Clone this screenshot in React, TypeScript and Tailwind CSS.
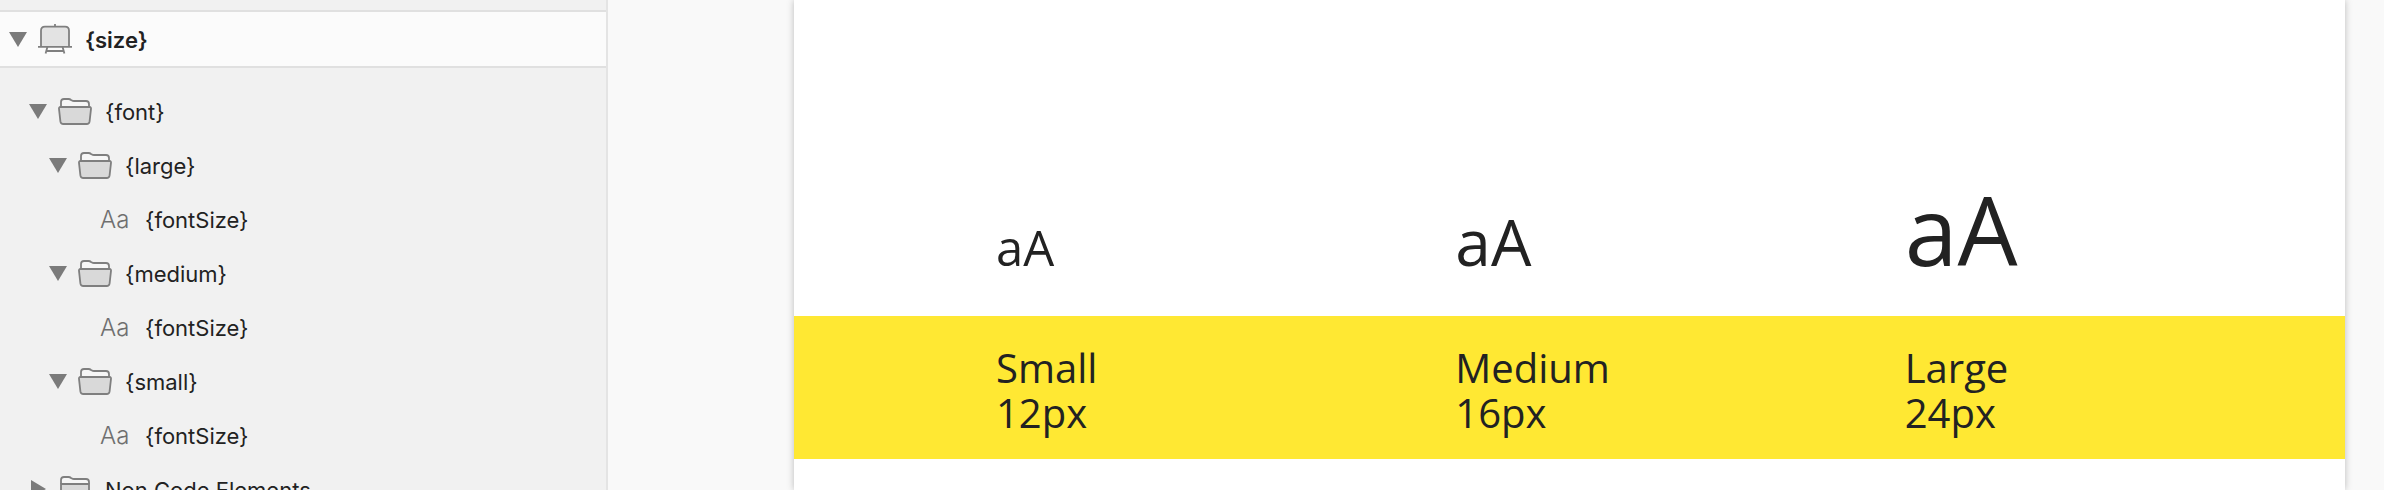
import React from "react";

function Disclosure({ open, label }: { open: boolean; label: string }) {
  return (
    <button
      type="button"
      aria-expanded={open}
      aria-label={label}
      className="flex h-6 w-[18px] shrink-0 items-center justify-center text-[#7b7b7b]"
    >
      {open ? (
        <svg width="18" height="15" viewBox="0 0 18 15" fill="currentColor" aria-hidden="true">
          <path d="M0 0H18L9 15Z" />
        </svg>
      ) : (
        <svg width="15" height="18" viewBox="0 0 15 18" fill="currentColor" aria-hidden="true">
          <path d="M0 0L15 9L0 18Z" />
        </svg>
      )}
    </button>
  );
}

function ArtboardIcon() {
  return (
    <svg width="34" height="30" viewBox="0 0 34 30" fill="none" stroke="#7f7f7f" strokeWidth="1.8" className="shrink-0" aria-hidden="true">
      <path d="M17 0V2.6" />
      <path d="M3 22.6V6.6Q3 2.6 7 2.6H27Q31 2.6 31 6.6V22.6" fill="#e3e3e3" />
      <path d="M0 22.8H34" />
      <path d="M9.4 23L7.6 29.4M24.6 23L26.4 29.4M8.6 27H25.4" />
    </svg>
  );
}

function OpenFolderIcon() {
  return (
    <svg width="34" height="27" viewBox="0 0 34 27" fill="none" stroke="#7f7f7f" strokeWidth="1.8" strokeLinejoin="round" className="shrink-0" aria-hidden="true">
      <path d="M3 9V4Q3 1 6 1H10.5Q12 1 13 2L14 2.6Q14.6 3 16 3H28Q31 3 31 6V9" fill="#f6f6f6" />
      <path d="M2.4 9H31.6Q33.2 9 33 10.8L31.6 23.4Q31.2 26 28.8 26H5.2Q2.8 26 2.4 23.4L1 10.8Q0.8 9 2.4 9Z" fill="#d9d9d9" />
    </svg>
  );
}

function ClosedFolderIcon() {
  return (
    <svg width="34" height="27" viewBox="0 0 34 27" fill="none" stroke="#7f7f7f" strokeWidth="1.8" strokeLinejoin="round" className="shrink-0" aria-hidden="true">
      <path d="M3 8V4Q3 1 6 1H10.5Q12 1 13 2L14 2.6Q14.6 3 16 3H28Q31 3 31 6V8" fill="#f6f6f6" />
      <path d="M3 8H31V23Q31 26 28 26H6Q3 26 3 23Z" fill="#d9d9d9" />
    </svg>
  );
}

function Folder({
  name,
  open = true,
  indent,
  children,
}: {
  name: string;
  open?: boolean;
  indent: string;
  children?: React.ReactNode;
}) {
  return (
    <li>
      <div className={`flex h-[54px] items-center ${indent}`}>
        <Disclosure open={open} label={`Toggle ${name}`} />
        <span className="ml-[11px] flex">{open ? <OpenFolderIcon /> : <ClosedFolderIcon />}</span>
        <span className="ml-[13px] pt-0.5 whitespace-nowrap">{name}</span>
      </div>
      {children && <ul>{children}</ul>}
    </li>
  );
}

function TextLayer({ name }: { name: string }) {
  return (
    <li className="flex h-[54px] items-center pt-0.5 pl-[100px]">
      <span className="w-[45px] shrink-0 text-2xl font-light text-[#6f6f6f]" aria-hidden="true">
        Aa
      </span>
      <span>{name}</span>
    </li>
  );
}

const sizes = [
  { name: "Small", value: "12px", sample: "text-[49px]" },
  { name: "Medium", value: "16px", sample: "text-[64px]" },
  { name: "Large", value: "24px", sample: "text-[95px]" },
];

const columns = "grid grid-cols-[459fr_449fr_440fr] pl-[202px]";

export default function App() {
  return (
    <div className="flex h-screen overflow-hidden bg-[#f9f9f9] text-[#222]">
      <aside className="w-[608px] shrink-0 overflow-hidden border-r-2 border-[#e4e4e4] bg-[#f1f1f1] pt-[10px] font-['Inter',sans-serif] text-[22px] leading-7">
        <div className="flex h-[58px] items-center border-y-2 border-[#e0e0e0] bg-[#fbfbfb] pl-[9px]">
          <Disclosure open label="Toggle {size}" />
          <span className="ml-[11px] flex">
            <ArtboardIcon />
          </span>
          <span className="ml-[13px] pt-0.5 font-semibold">{"{size}"}</span>
        </div>
        <ul className="pt-4">
          <Folder name="{font}" indent="pl-[29px]">
            {["{large}", "{medium}", "{small}"].map((name) => (
              <Folder key={name} name={name} indent="pl-[49px]">
                <TextLayer name="{fontSize}" />
              </Folder>
            ))}
          </Folder>
          <Folder name="Non Code Elements" open={false} indent="pl-[29px]" />
        </ul>
      </aside>
      <main className="ml-[186px] mr-[39px] min-w-0 flex-1 bg-white font-['Open_Sans',sans-serif] shadow-[0_0_7px_rgba(0,0,0,0.25)]">
        <div className={`${columns} h-[316px] items-baseline-last content-end pb-[22px]`}>
          {sizes.map((s) => (
            <p key={s.name} className={`${s.sample} leading-[94px]`}>
              aA
            </p>
          ))}
        </div>
        <div className={`${columns} bg-[#ffe833] pt-[29px] pb-[24px] text-[40px] leading-[45px]`}>
          {sizes.map((s) => (
            <div key={s.name}>
              <h2>{s.name}</h2>
              <p>{s.value}</p>
            </div>
          ))}
        </div>
      </main>
    </div>
  );
}
